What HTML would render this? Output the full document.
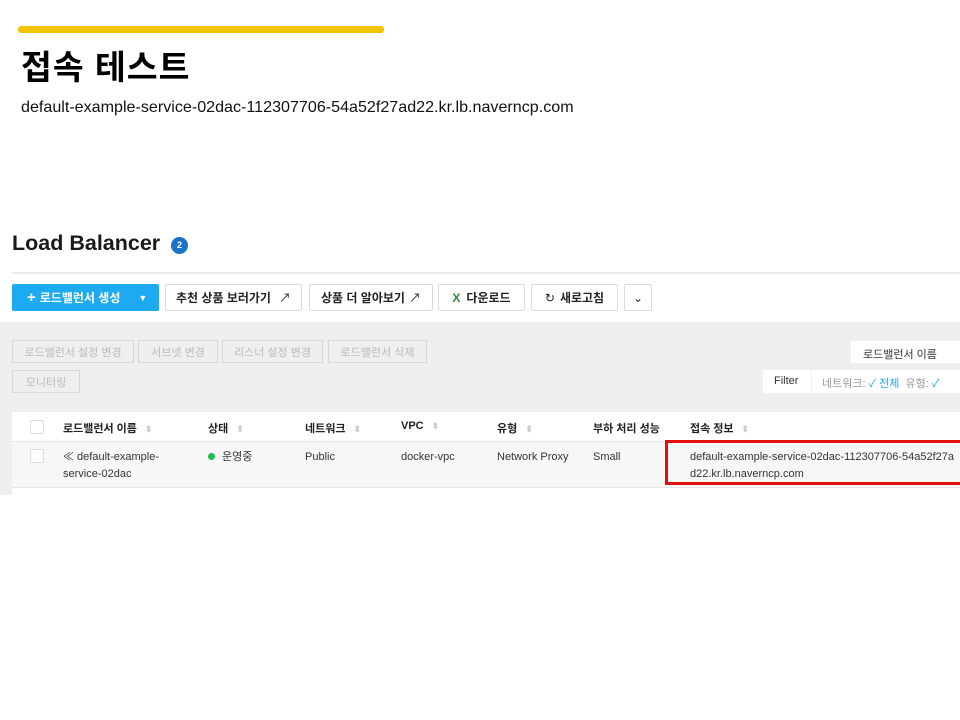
<!DOCTYPE html>
<html><head><meta charset="utf-8"><style>
*{margin:0;padding:0;box-sizing:border-box}
body{width:960px;height:720px;background:#fff;position:relative;overflow:hidden;font-family:"Liberation Sans","Noto Sans CJK KR",sans-serif;color:#222}
.a{position:absolute;white-space:nowrap}
.btn{position:absolute;height:27px;border:1px solid #dcdcdc;background:#fff;font-size:12px;font-weight:bold;display:flex;align-items:center;justify-content:center;color:#222;border-radius:2px}
.dis{position:absolute;height:23px;border:1px solid #d8d8d8;background:#efefef;font-size:11px;color:#bbb;display:flex;align-items:center;justify-content:center}
.th{position:absolute;top:420px;font-size:11px;font-weight:bold;color:#222}
.td{position:absolute;top:449px;font-size:11px;color:#333;line-height:17px}
.s{color:#ccc;font-size:9px;margin-left:8px}
.cb{position:absolute;left:30px;width:14px;height:14px;border:1px solid #ddd;background:#fff;border-radius:2px}
</style></head><body>
<div class="a" style="left:18px;top:26px;width:366px;height:7px;background:#f5c400;border-radius:3px"></div>
<div class="a" style="left:21px;top:40px;font-size:33.5px;font-weight:bold;color:#000;letter-spacing:1px">접속 테스트</div>
<div class="a" style="left:21px;top:98px;font-size:16.1px;color:#111">default-example-service-02dac-112307706-54a52f27ad22.kr.lb.naverncp.com</div>

<div class="a" style="left:12px;top:231px;font-size:21.5px;font-weight:bold;color:#1a1a1a">Load Balancer</div>
<div class="a" style="left:171px;top:237px;width:17px;height:17px;border-radius:50%;background:#1a73c8;color:#fff;font-size:9px;font-weight:bold;text-align:center;line-height:17px">2</div>
<div class="a" style="left:12px;top:272px;width:948px;height:2px;background:#ececec"></div>

<div class="btn" style="left:12px;top:284px;width:147px;background:#1eaaf1;border-color:#1eaaf1;color:#fff;justify-content:flex-start;padding-left:14px"><span style="font-size:15px;margin-right:4px">+</span>로드밸런서 생성<span style="margin-left:18px;font-size:9px">▼</span></div>
<div class="btn" style="left:165px;top:284px;width:137px">추천 상품 보러가기 <span style="margin-left:8px;font-weight:normal">↗</span></div>
<div class="btn" style="left:309px;top:284px;width:124px">상품 더 알아보기 <span style="margin-left:4px;font-weight:normal">↗</span></div>
<div class="btn" style="left:438px;top:284px;width:87px"><span style="color:#2e8b3a;margin-right:6px">X</span>다운로드</div>
<div class="btn" style="left:531px;top:284px;width:87px"><span style="margin-right:5px;font-weight:normal">↻</span>새로고침</div>
<div class="btn" style="left:624px;top:284px;width:28px;font-weight:normal">⌄</div>

<div class="a" style="left:0;top:322px;width:960px;height:173px;background:#efefef"></div>
<div class="dis" style="left:12px;top:340px;width:122px">로드밸런서 설정 변경</div>
<div class="dis" style="left:138px;top:340px;width:80px">서브넷 변경</div>
<div class="dis" style="left:222px;top:340px;width:101px">리스너 설정 변경</div>
<div class="dis" style="left:328px;top:340px;width:99px">로드밸런서 삭제</div>
<div class="dis" style="left:12px;top:370px;width:68px">모니터링</div>
<div class="a" style="left:851px;top:341px;width:109px;height:22px;background:#fff;font-size:11px;padding:5px 0 0 12px;color:#333">로드밸런서 이름</div>
<div class="a" style="left:763px;top:370px;width:48px;height:23px;background:#fff;font-size:11px;padding:5px 0 0 11px;color:#333">Filter</div>
<div class="a" style="left:812px;top:370px;width:148px;height:23px;background:#fff;font-size:11px;padding:5px 0 0 10px;color:#999">네트워크: <span style="color:#1eaaf1">✓ 전체</span> &nbsp;유형: <span style="color:#1eaaf1">✓</span></div>

<div class="a" style="left:12px;top:412px;width:948px;height:83px;background:#fff"></div>
<div class="a" style="left:12px;top:441px;width:948px;height:1px;background:#e6e6e6"></div>
<div class="a" style="left:12px;top:442px;width:948px;height:45px;background:#f7f7f7"></div>
<div class="a" style="left:12px;top:487px;width:948px;height:1px;background:#e6e6e6"></div>
<div class="cb" style="top:420px"></div>
<div class="cb" style="top:449px"></div>
<div class="th" style="left:63px">로드밸런서 이름<span class="s">⬍</span></div>
<div class="th" style="left:208px">상태<span class="s">⬍</span></div>
<div class="th" style="left:305px">네트워크<span class="s">⬍</span></div>
<div class="th" style="left:401px">VPC<span class="s">⬍</span></div>
<div class="th" style="left:497px">유형<span class="s">⬍</span></div>
<div class="th" style="left:593px">부하 처리 성능</div>
<div class="th" style="left:690px">접속 정보<span class="s">⬍</span></div>
<div class="td" style="left:63px">≪ default-example-<br>service-02dac</div>
<div class="td" style="left:208px"><span style="display:inline-block;width:7px;height:7px;border-radius:50%;background:#22c04a;margin-right:7px"></span>운영중</div>
<div class="td" style="left:305px">Public</div>
<div class="td" style="left:401px">docker-vpc</div>
<div class="td" style="left:497px">Network Proxy</div>
<div class="td" style="left:593px">Small</div>
<div class="td" style="left:690px">default-example-service-02dac-112307706-54a52f27a<br>d22.kr.lb.naverncp.com</div>
<div class="a" style="left:665px;top:440px;width:300px;height:45px;border:3px solid #e01010"></div>
</body></html>
